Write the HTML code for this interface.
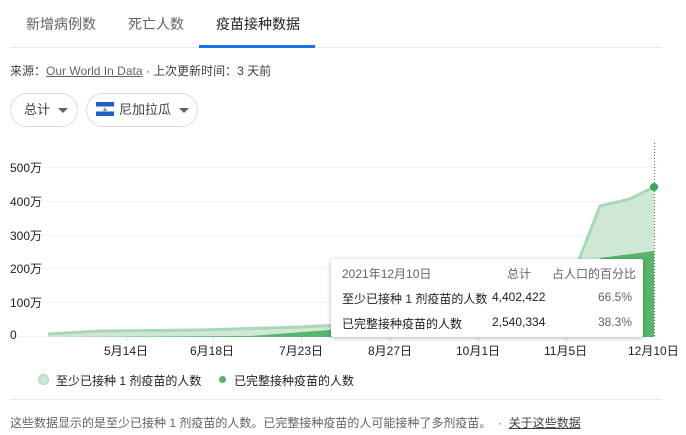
<!DOCTYPE html>
<html><head><meta charset="utf-8"><style>
body{margin:0;width:686px;height:435px;background:#fff;font-family:"Liberation Sans","Noto Sans CJK SC",sans-serif;position:relative;overflow:hidden;color:#202124}
.a{position:absolute;white-space:nowrap}
.tab{font-size:14px;color:#5f6368;top:14px}
.pill{position:absolute;top:93px;height:34px;border:1px solid #dadce0;border-radius:18px;box-sizing:border-box;font-size:13px;color:#3c4043;line-height:32px}
.caret{display:inline-block;width:0;height:0;border-left:5px solid transparent;border-right:5px solid transparent;border-top:5px solid #5f6368;vertical-align:middle;margin-left:8px}
.yl{font-size:12px;color:#202124;left:10px}
.xl{font-size:12px;color:#202124;top:342px}
</style></head><body>
<div class="a tab" style="left:26px">新增病例数</div>
<div class="a tab" style="left:128px">死亡人数</div>
<div class="a tab" style="left:216px;color:#202124">疫苗接种数据</div>
<div class="a" style="left:10px;right:24px;top:47px;height:1px;background:#e8eaed"></div>
<div class="a" style="left:199px;top:45px;width:116px;height:3px;background:#1a73e8"></div>
<div class="a" style="left:10px;top:62px;font-size:12px;color:#3c4043">来源：<span style="text-decoration:underline;color:#5f6368">Our World In Data</span> · 上次更新时间：3 天前</div>
<div class="pill" style="left:10px;width:68px;padding-left:13px">总计<span class="caret"></span></div>
<div class="pill" style="left:86px;width:112px;padding-left:9px"><svg width="18" height="14" style="vertical-align:-2px;margin-right:5px"><rect width="18" height="14" fill="#fff"/><rect width="18" height="4.5" fill="#1f5fc3"/><rect y="9.5" width="18" height="4.5" fill="#1f5fc3"/><polygon points="9,5 11,9 7,9" fill="#6aa84f"/></svg>尼加拉瓜<span class="caret"></span></div>
<svg class="a" style="left:0;top:0" width="686" height="435">
<g stroke="#f1f3f4" stroke-width="1">
<line x1="10" x2="660" y1="167.5" y2="167.5"/><line x1="10" x2="660" y1="201.5" y2="201.5"/><line x1="10" x2="660" y1="235.5" y2="235.5"/><line x1="10" x2="660" y1="268.5" y2="268.5"/><line x1="10" x2="660" y1="302.5" y2="302.5"/><line x1="10" x2="660" y1="336.5" y2="336.5"/>
</g>
<polygon points="48,334 100,331 200,330 300,327 400,322 500,312 560,300 575,270 600,206 630,199 654,187 654,337 48,337" fill="#cfe8d6"/>
<polyline points="48,334 100,331 200,330 300,327 400,322 500,312 560,300 575,270 600,206 630,199 654,187" fill="none" stroke="#a8d8b5" stroke-width="3"/>
<polygon points="48,337 250,336 330,330 400,326 500,322 580,300 600,258 654,251 654,337" fill="#56b46d"/>
<line x1="654.5" y1="143" x2="654.5" y2="337" stroke="#5f6368" stroke-dasharray="1,2"/>
<circle cx="654" cy="187" r="4" fill="#34a853"/>
<g stroke="#dadce0"><line x1="126.5" x2="126.5" y1="337" y2="341"/><line x1="213.5" x2="213.5" y1="337" y2="341"/><line x1="301.5" x2="301.5" y1="337" y2="341"/><line x1="390.5" x2="390.5" y1="337" y2="341"/><line x1="478.5" x2="478.5" y1="337" y2="341"/><line x1="566.5" x2="566.5" y1="337" y2="341"/></g>
</svg>
<div class="a yl" style="top:159px">500万</div>
<div class="a yl" style="top:193px">400万</div>
<div class="a yl" style="top:227px">300万</div>
<div class="a yl" style="top:260px">200万</div>
<div class="a yl" style="top:294px">100万</div>
<div class="a yl" style="top:328px">0</div>
<div class="a xl" style="left:104px">5月14日</div>
<div class="a xl" style="left:190px">6月18日</div>
<div class="a xl" style="left:279px">7月23日</div>
<div class="a xl" style="left:368px">8月27日</div>
<div class="a xl" style="left:456px">10月1日</div>
<div class="a xl" style="left:544px">11月5日</div>
<div class="a xl" style="left:628px">12月10日</div>
<div class="a" style="left:331px;top:259px;width:312px;height:78px;background:#fff;box-shadow:0 1px 4px rgba(0,0,0,.3);border-radius:2px;font-size:12px">
<div class="a" style="left:11px;top:6px;color:#5f6368">2021年12月10日</div>
<div class="a" style="left:176px;top:6px;color:#5f6368">总计</div>
<div class="a" style="left:221px;top:6px;color:#5f6368">占人口的百分比</div>
<div class="a" style="left:11px;top:31px">至少已接种 1 剂疫苗的人数</div>
<div class="a" style="left:161px;top:31px">4,402,422</div>
<div class="a" style="right:11px;top:31px;color:#5f6368">66.5%</div>
<div class="a" style="left:11px;top:56px">已完整接种疫苗的人数</div>
<div class="a" style="left:161px;top:56px">2,540,334</div>
<div class="a" style="right:11px;top:56px;color:#5f6368">38.3%</div>
</div>
<div class="a" style="left:38px;top:374px;width:9px;height:9px;border-radius:50%;background:#cfe8d6;border:1px solid #a8d8b5"></div>
<div class="a" style="left:56px;top:372px;font-size:12px">至少已接种 1 剂疫苗的人数</div>
<div class="a" style="left:219px;top:376px;width:7px;height:7px;border-radius:50%;background:#56b46d"></div>
<div class="a" style="left:234px;top:372px;font-size:12px">已完整接种疫苗的人数</div>
<div class="a" style="left:10px;right:24px;top:399px;height:1px;background:#e8eaed"></div>
<div class="a" style="left:10px;top:414px;font-size:12px;color:#5f6368">这些数据显示的是至少已接种 1 剂疫苗的人数。已完整接种疫苗的人可能接种了多剂疫苗。 &nbsp;· &nbsp;<span style="text-decoration:underline;color:#3c4043">关于这些数据</span></div>
</body></html>
